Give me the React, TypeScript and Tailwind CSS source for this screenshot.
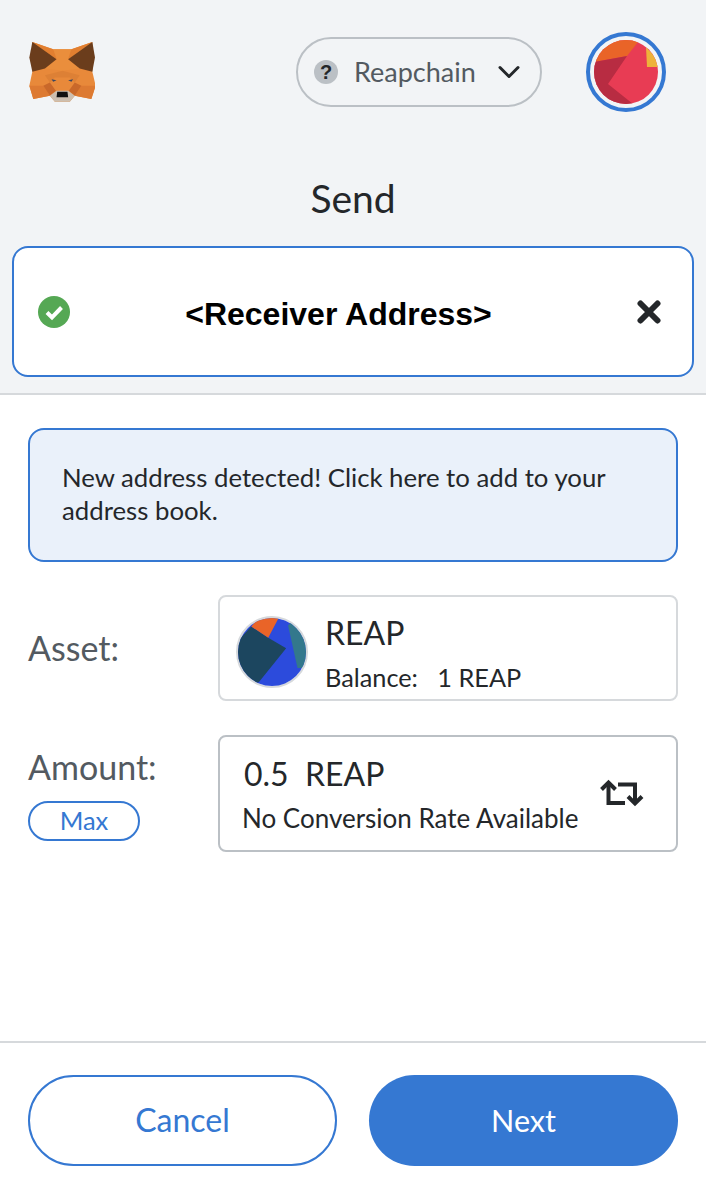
import { ChevronDown } from "lucide-react";

const FoxLogo = () => (
  <svg viewBox="25 25 200 190" className="w-[67px] h-[63px] shrink-0">
    <polygon points="37,28 100,50 155,50 218,28 218,118 228,160 215,200 165,190 150,208 105,208 90,190 40,200 28,160 37,118" fill="#e8893a" />
    <polygon points="100,50 155,50 145,80 180,108 128,115 75,108 110,80" fill="#ea8e3c" />
    <polygon points="37,28 100,50 110,80" fill="#e27f30" />
    <polygon points="218,28 155,50 145,80" fill="#e27f30" />
    <polygon points="37,28 110,80 75,108 37,118 28,75" fill="#6b3d1c" />
    <polygon points="218,28 145,80 180,108 218,118 226,75" fill="#6b3d1c" />
    <polygon points="75,128 128,115 180,128 165,150 150,135 105,135 90,150" fill="#dd8035" />
    <polygon points="28,160 70,160 90,190 40,200" fill="#dd7a32" />
    <polygon points="228,160 185,160 165,190 215,200" fill="#dd7a32" />
    <polygon points="70,160 90,150 108,175 90,190" fill="#c9682a" />
    <polygon points="185,160 165,150 147,175 165,190" fill="#c9682a" />
    <polygon points="90,190 110,175 145,175 165,190 150,208 105,208" fill="#cdbfb0" />
    <polygon points="112,178 143,178 145,195 110,195" fill="#111111" />
    <polygon points="95,140 110,143 100,148" fill="#3b4660" />
    <polygon points="160,140 145,143 155,148" fill="#3b4660" />
  </svg>
);

const AccountIcon = () => (
  <svg viewBox="0 0 64 64" className="w-16 h-16 rounded-full">
    <rect width="64" height="64" fill="#e83c54" />
    <polygon points="0,22 33,16 44,2 44,0 0,0" fill="#e96428" />
    <polygon points="0,22 33,16 14,44 39,64 0,64" fill="#b82c42" />
    <polygon points="52,7 64,20 64,27 53,27" fill="#eeb23a" />
  </svg>
);

const TokenIcon = () => (
  <svg viewBox="0 0 72 72" className="w-[72px] h-[72px] mt-[8px] shrink-0 rounded-full border-2 border-[#d6d9dc]">
    <rect width="72" height="72" fill="#2c4bdc" />
    <polygon points="0,24 14,9 32,21 51,32 22,68 0,72" fill="#1c465f" />
    <polygon points="14,9 22,0 43,0 32,21" fill="#e96428" />
    <polygon points="53,8 60,0 72,0 72,53 63,53" fill="#33788c" />
  </svg>
);

const SwapIcon = () => (
  <svg viewBox="0 0 44 28" className="w-11 h-7 shrink-0 -mt-[2px]" fill="none" stroke="#24272a" strokeWidth="4">
    <path d="M8.5 4V24H25" />
    <path d="M1.5 10.5 8.5 3.5l7 7" />
    <path d="M18 5.5H35V24" />
    <path d="M28 17.5l7 7 7-7" />
  </svg>
);

export default function App() {
  return (
    <div className="w-[706px] h-[1196px] flex flex-col bg-white text-[#24272a] font-['Lato','Noto_Sans',sans-serif]">
      {/* Header */}
      <div className="bg-[#f2f4f6] border-b-2 border-[#d6d9dc] h-[395px] flex flex-col">
        <div className="flex items-center pl-7 pt-8">
          <FoxLogo />
          <div className="ml-[201px] h-[70px] w-[246px] shrink-0 flex items-center rounded-full border-2 border-[#bbc0c5] pl-[16px]">
            <span className="w-6 h-6 rounded-full bg-[#bbc0c5] flex items-center justify-center text-[20px] font-bold leading-none font-['Liberation_Sans',sans-serif]">?</span>
            <span className="ml-4 text-[27px] text-[#535a61]">Reapchain</span>
            <ChevronDown className="ml-[15px] w-9 h-9" strokeWidth={2} />
          </div>
          <div className="ml-[44px] w-20 h-20 shrink-0 rounded-full border-[4px] border-[#3578d2] flex items-center justify-center">
            <AccountIcon />
          </div>
        </div>
        <div className="mt-[64px] text-center text-[39px] leading-[44px]">Send</div>
        <div className="mx-3 mt-[26px] h-[131px] rounded-2xl border-2 border-[#3578d2] bg-white flex items-center pl-6 pr-[31px]">
          <svg viewBox="0 0 32 32" className="w-8 h-8 shrink-0">
            <circle cx="16" cy="16" r="16" fill="#55a854" />
            <path d="M9 16.5l5 5 9.5-10" fill="none" stroke="white" strokeWidth="4" />
          </svg>
          <span className="flex-1 text-center pr-[30px] mt-[4px] text-[32px] font-bold text-black font-['Liberation_Sans',sans-serif]">&lt;Receiver Address&gt;</span>
          <svg viewBox="0 0 24 24" className="w-6 h-6 shrink-0">
            <path d="M3.5 3.5l17 17M20.5 3.5l-17 17" stroke="#24272a" strokeWidth="6" strokeLinecap="round" />
          </svg>
        </div>
      </div>

      {/* Form */}
      <div className="flex-1 flex flex-col px-7 pt-[33px] border-b-2 border-[#d6d9dc]">
        <div className="h-[134px] rounded-2xl border-2 border-[#3578d2] bg-[#eaf1fa] pl-[32px] pr-4 pb-[2px] flex items-center text-[25.75px] leading-[33px]">
          New address detected! Click here to add to your address book.
        </div>

        <div className="mt-[33px] flex items-center">
          <div className="w-[190px] text-[34px] text-[#535a61] pb-[2px]">Asset:</div>
          <div className="flex-1 h-[106px] rounded-lg border-2 border-[#d6d9dc] flex items-center pl-[16px]">
            <TokenIcon />
            <div className="ml-[17px] mt-[10px]">
              <div className="text-[32px] leading-[40px]">REAP</div>
              <div className="text-[25.3px] leading-[32px] mt-[8px]">Balance:&nbsp;&nbsp; 1 REAP</div>
            </div>
          </div>
        </div>

        <div className="mt-[34px] flex items-start">
          <div className="w-[190px]">
            <div className="text-[34px] leading-[40px] mt-[12px] text-[#535a61]">Amount:</div>
            <div className="mt-[14px] w-[112px] h-10 rounded-full border-2 border-[#3578d2] text-[#3578d2] text-[25.5px] pb-[2px] flex items-center justify-center">Max</div>
          </div>
          <div className="flex-1 h-[117px] rounded-lg border-2 border-[#bbc0c5] flex items-center pl-6 pr-8">
            <div className="flex-1 mt-[4px]">
              <div className="text-[32px] leading-[40px] -mt-[3px]">0.5&nbsp; REAP</div>
              <div className="text-[26px] leading-[32px] mt-[8px] -ml-[2px]">No Conversion Rate Available</div>
            </div>
            <SwapIcon />
          </div>
        </div>
      </div>

      {/* Footer */}
      <div className="h-[153px] flex gap-8 px-7 pt-8">
        <button className="w-[309px] h-[91px] rounded-full border-2 border-[#3578d2] text-[#3578d2] text-[32px] pb-[2px]">Cancel</button>
        <button className="w-[309px] h-[91px] rounded-full bg-[#3578d2] text-white text-[30.5px]">Next</button>
      </div>
    </div>
  );
}
